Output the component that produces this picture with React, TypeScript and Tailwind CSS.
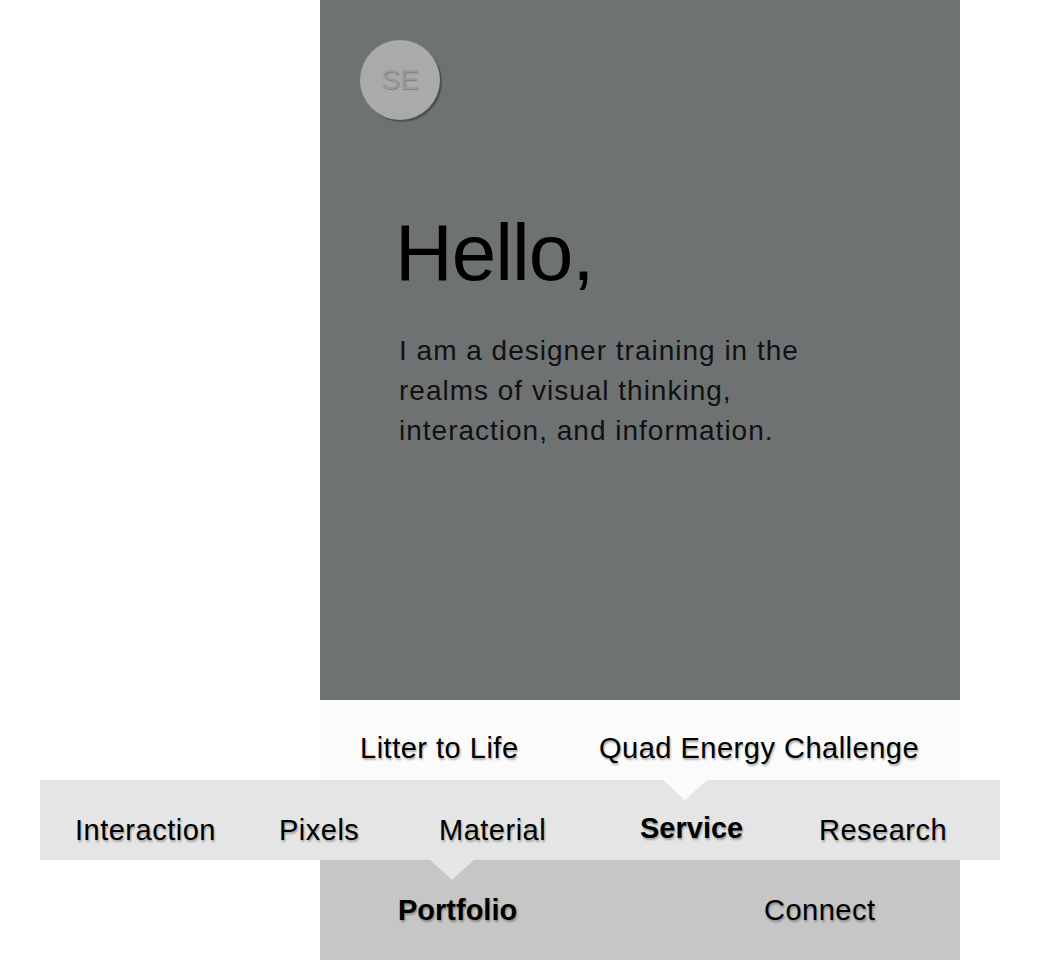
const navShadow = "[text-shadow:1px_2px_2px_rgba(0,0,0,0.3)]";

function Notch({ color, className }: { color: string; className: string }) {
  return (
    <div
      className={`absolute top-0 h-0 w-0 border-x-[22px] border-t-[20px] border-x-transparent ${color} ${className}`}
    />
  );
}

export default function App() {
  return (
    <div className="min-h-screen bg-white font-['Liberation_Sans',Arial,sans-serif] text-black">
      <section className="ml-[320px] h-[700px] w-[640px] bg-[#6f7273] pl-10 pt-10">
        <div className="flex h-20 w-20 items-center justify-center rounded-full bg-[#a9aaaa] shadow-[2px_2px_1px_rgba(0,0,0,0.3)]">
          <span className="text-[28px] leading-none text-[#999a9a] [text-shadow:1px_1px_1px_rgba(0,0,0,0.25)]">
            SE
          </span>
        </div>
        <div className="ml-[39px]">
          <h1 className="-ml-[4px] mt-[93px] text-[80px] leading-none tracking-[-1px] text-black">
            Hello,
          </h1>
          <p className="mt-[38px] w-[420px] text-[28px] leading-[40px] tracking-[1px] text-[#111]">
            I am a designer training in the realms of visual thinking, interaction, and information.
          </p>
        </div>
      </section>

      <nav className="ml-[320px] flex h-20 w-[640px] items-center bg-[#fbfbfb] pl-10 pt-4 text-[29px] leading-none tracking-[0.5px]">
        <span className={`w-[239px] ${navShadow}`}>Litter to Life</span>
        <span className={navShadow}>Quad Energy Challenge</span>
      </nav>

      <nav className="relative ml-10 flex h-20 w-[960px] items-center bg-[#e5e5e5] pl-[35px] pt-5 text-[29px] leading-none tracking-[0.5px]">
        <Notch color="border-t-[#fbfbfb]" className="left-[623px]" />
        <span className={`w-[204px] ${navShadow}`}>Interaction</span>
        <span className={`w-[160px] ${navShadow}`}>Pixels</span>
        <span className={`w-[201px] ${navShadow}`}>Material</span>
        <span className={`mb-1 w-[179px] font-bold tracking-normal ${navShadow}`}>Service</span>
        <span className={navShadow}>Research</span>
      </nav>

      <nav className="relative ml-[320px] flex h-[100px] w-[640px] items-center bg-[#c6c6c6] pl-[78px] text-[29px] leading-none tracking-[0.5px]">
        <Notch color="border-t-[#e5e5e5]" className="left-[110px]" />
        <span className={`w-[366px] font-bold tracking-normal ${navShadow}`}>Portfolio</span>
        <span className={navShadow}>Connect</span>
      </nav>
    </div>
  );
}
